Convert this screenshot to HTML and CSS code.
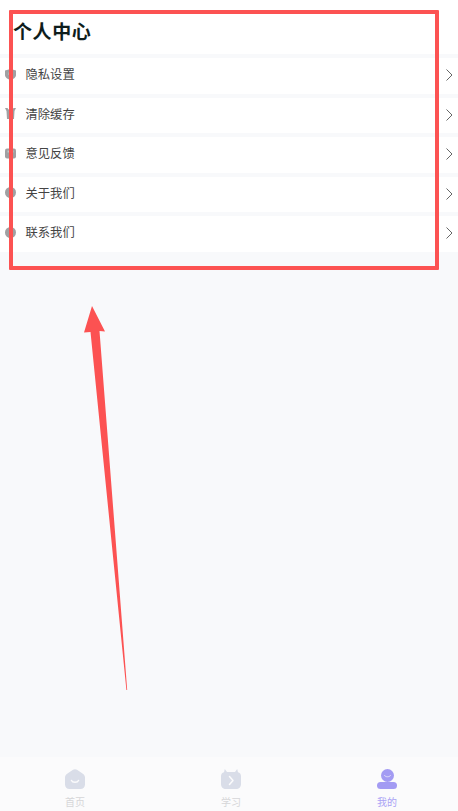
FILE: index.html
```html
<!DOCTYPE html>
<html lang="zh-CN">
<head>
<meta charset="utf-8">
<title>个人中心</title>
<link rel="stylesheet" href="styles.css">
</head>
<body>
<div class="page">
  <main class="content">
    <header class="header"><h1 class="title">个人中心</h1></header>
    <ul class="list">
      <li class="row">
        <svg class="row-icon" viewBox="0 0 11 11"><path d="M0 1.500 5.500 0 11 1.500V6c0 2.500-2.800 4.200-5.500 5C2.800 10.200 0 8.500 0 6Z"/><path class="cut" d="M3.500 3.500h4v2.500h-4z"/></svg>
        <span class="row-label">隐私设置</span>
        <svg class="chevron" viewBox="0 0 7 12"><path d="M.5.500 6 6 .5 11.500"/></svg>
      </li>
      <li class="row">
        <svg class="row-icon" viewBox="0 0 11 11"><path d="M0 0h2.500l1 1.500h4l1-1.500H11L9.500 3 9 11H2L1.500 3Z"/></svg>
        <span class="row-label">清除缓存</span>
        <svg class="chevron" viewBox="0 0 7 12"><path d="M.5.500 6 6 .5 11.500"/></svg>
      </li>
      <li class="row">
        <svg class="row-icon" viewBox="0 0 11 11"><rect y="0.500" width="11" height="10" rx="2"/><path class="cut" d="M2.500 2.500h6v2h-6z"/></svg>
        <span class="row-label">意见反馈</span>
        <svg class="chevron" viewBox="0 0 7 12"><path d="M.5.500 6 6 .5 11.500"/></svg>
      </li>
      <li class="row">
        <svg class="row-icon" viewBox="0 0 11 11"><circle cx="5.500" cy="5.500" r="5.500"/></svg>
        <span class="row-label">关于我们</span>
        <svg class="chevron" viewBox="0 0 7 12"><path d="M.5.500 6 6 .5 11.500"/></svg>
      </li>
      <li class="row">
        <svg class="row-icon" viewBox="0 0 11 11"><circle cx="5.500" cy="5.500" r="5.500"/></svg>
        <span class="row-label">联系我们</span>
        <svg class="chevron" viewBox="0 0 7 12"><path d="M.5.500 6 6 .5 11.500"/></svg>
      </li>
    </ul>
  </main>
  <nav class="tabbar">
    <div class="tab">
      <svg class="tab-icon" viewBox="0 0 20 20"><path class="fill-idle" d="M8 .800C9.200 0 10.800 0 12 .800L17.500 4.500C19 5.500 20 6.800 20 8.500V15.500C20 18.200 18.200 20 15.500 20H4.500C1.800 20 0 18.200 0 15.500V8.500C0 6.800 1 5.500 2.500 4.500Z"/><path class="smile" d="M6.500 11.500c1 2.400 6 2.400 7 0"/></svg>
      <span class="tab-label">首页</span>
    </div>
    <div class="tab">
      <svg class="tab-icon" viewBox="0 0 20 20"><path class="fill-idle" d="M3 3.200 3.800 0 6 3h8l2.200-3 .8 3.200C18.800 3.800 20 5 20 7v8c0 3-2 5-5 5H5c-3 0-5-2-5-5V7c0-2 1.200-3.200 3-3.800Z"/><path class="smile" d="M8.500 7.500 12 11.500l-3.500 4"/></svg>
      <span class="tab-label">学习</span>
    </div>
    <div class="tab tab-active">
      <svg class="tab-icon" viewBox="0 0 20 20"><circle class="fill-active" cx="10.500" cy="6.500" r="6.500"/><rect class="fill-active" y="13" width="20" height="7" rx="3.500"/><path class="smile-thin" d="M7.500 6.500c.8 1.800 5.200 1.800 6 0"/></svg>
      <span class="tab-label">我的</span>
    </div>
  </nav>
  <div class="note-box"></div>
  <svg class="note-arrow" viewBox="0 0 458 811"><path d="M92 306 105 331.500 99.500 331 127.200 690H126.400L90.500 332 84 332.500Z"/></svg>
</div>
</body>
</html>
```

FILE: styles.css
```css
* { box-sizing: border-box; }
html, body { margin: 0; padding: 0; }
body {
  font-family: "Noto Sans CJK SC", "Noto Sans", sans-serif;
  background: #f8f9fb;
}
.page {
  position: relative;
  width: 458px;
  height: 811px;
  display: flex;
  flex-direction: column;
  overflow: hidden;
}
.content { flex: 1; }
.header {
  height: 54px;
  background: #fff;
  padding: 16px 0 0 13px;
}
.title {
  margin: 0;
  font-size: 19px;
  font-weight: 700;
  line-height: 30px;
  color: #0e1d1c;
  letter-spacing: 0.6px;
}
.list { margin: 0; padding: 0; list-style: none; }
.row {
  height: 35.500px;
  margin-top: 4px;
  background: #fff;
  display: flex;
  align-items: center;
  padding: 0 5px 0 5px;
}
.row-icon { width: 11px; height: 11px; fill: #a0a0a2; flex: none; margin-bottom: 3px; }
.row-icon .cut { fill: #c4c4c6; }
.row-label {
  flex: 1;
  margin: 0 0 3px 9.500px;
  font-size: 12.300px;
  line-height: 18px;
  color: #444;
}
.chevron {
  width: 7px;
  height: 12px;
  flex: none;
  margin-bottom: 1px;
  fill: none;
  stroke: #666;
  stroke-width: 1;
}
.tabbar {
  height: 54px;
  background: #fbfbfc;
  display: grid;
  grid-template-columns: repeat(3, 156px);
  margin-left: -3px;
  padding-top: 12px;
}
.tab {
  display: flex;
  flex-direction: column;
  align-items: center;
}
.tab-icon { width: 20px; height: 20px; flex: none; }
.fill-idle { fill: #d9dde8; }
.fill-active { fill: #a39bf3; }
.smile { fill: none; stroke: #fbfbfc; stroke-width: 1.500; stroke-linecap: round; stroke-linejoin: round; }
.smile-thin { fill: none; stroke: #e4e1fb; stroke-width: 1; stroke-linecap: round; }
.tab-label {
  margin-top: 5px;
  font-size: 10px;
  line-height: 16px;
  color: #d6d6d8;
}
.tab-active .tab-label { color: #aaa2f5; }
.note-box {
  position: absolute;
  left: 9px;
  top: 10px;
  width: 430px;
  height: 260px;
  border: 4px solid #fc5252;
  border-radius: 1px;
}
.note-arrow {
  position: absolute;
  left: 0;
  top: 0;
  width: 458px;
  height: 811px;
  fill: #fc5252;
}
```
